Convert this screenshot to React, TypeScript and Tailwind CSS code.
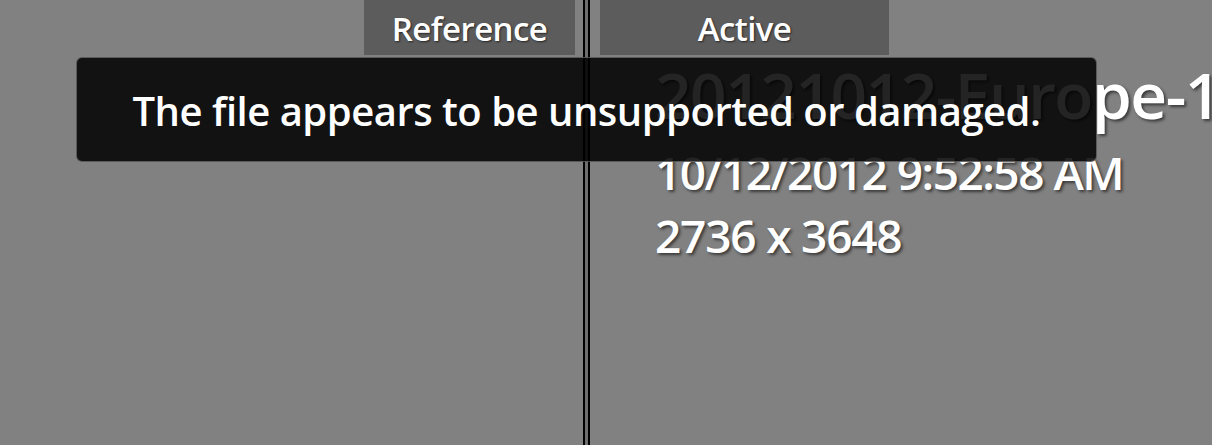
export default function App() {
  return (
    <div className="relative h-[445px] w-[1212px] overflow-hidden bg-[#818181] font-['Open_Sans',sans-serif] text-white">
      <div className="flex h-full">
        {/* left: reference */}
        <div className="flex w-[583px] shrink-0 flex-col items-end pr-2">
          <div className="flex h-[55px] w-[211px] items-center justify-center bg-[#5c5c5c] pt-[2px] text-[33px] font-semibold tracking-[-0.6px] [text-shadow:1px_1px_2px_rgba(0,0,0,0.6)]">
            Reference
          </div>
        </div>

        {/* divider */}
        <div className="flex h-full w-[7px] shrink-0">
          <div className="w-[2px] bg-black" />
          <div className="w-[3px] bg-[#6e6e6e]" />
          <div className="w-[2px] bg-black" />
        </div>

        {/* right: active */}
        <div className="flex min-w-0 flex-1 flex-col pl-[10px]">
          <div className="flex h-[55px] w-[289px] items-center justify-center bg-[#5c5c5c] pt-[2px] text-[33px] font-semibold tracking-[-0.6px] [text-shadow:1px_1px_2px_rgba(0,0,0,0.6)]">
            Active
          </div>
          <div className="pl-[55px] font-semibold [text-shadow:2px_2px_3px_rgba(0,0,0,0.55)]">
            <div className="mt-[8px] whitespace-nowrap text-[64px] leading-[64px] tracking-[-1.5px]">
              20121012-Europe-1234.jpg
            </div>
            <div className="mt-[14px] whitespace-nowrap text-[46px] leading-[63px] tracking-[-1.5px]">
              10/12/2012 9:52:58 AM
            </div>
            <div className="whitespace-nowrap text-[46px] leading-[63px] tracking-[-1.2px]">
              2736 x 3648
            </div>
          </div>
        </div>
      </div>

      {/* error toast */}
      <div className="absolute left-[76px] top-[57px] flex h-[105px] w-[1021px] items-center justify-center rounded-md border border-white/30 bg-black/[0.86] pt-[3px]">
        <p className="whitespace-nowrap text-[40px] font-semibold tracking-[-0.5px] text-white">
          The file appears to be unsupported or damaged.
        </p>
      </div>
    </div>
  );
}
